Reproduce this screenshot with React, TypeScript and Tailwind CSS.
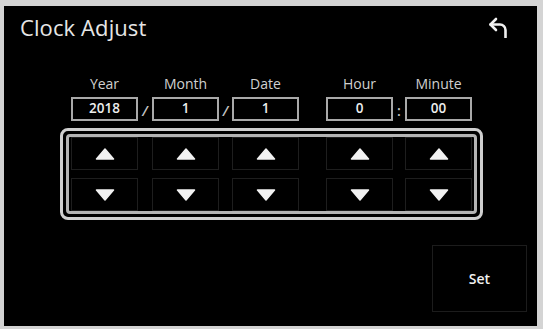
import React from "react";

const cols = [
  { label: "Year", value: "2018" },
  { label: "Month", value: "1" },
  { label: "Date", value: "1" },
  { label: "Hour", value: "0" },
  { label: "Minute", value: "00" },
];
const seps = ["/", "/", "", ":"];
const sepW = ["w-[14px]", "w-[13px]", "w-[27px]", "w-[12px]"];

function Up() {
  return (
    <svg width="20" height="12" viewBox="0 0 20 12">
      <path d="M10 1 L18.5 11 L1.5 11 Z" fill="#f2f2f2" stroke="#f2f2f2" strokeWidth="1.5" strokeLinejoin="round" />
    </svg>
  );
}
function Down() {
  return (
    <svg width="20" height="12" viewBox="0 0 20 12">
      <path d="M1.5 1 L18.5 1 L10 11 Z" fill="#f2f2f2" stroke="#f2f2f2" strokeWidth="1.5" strokeLinejoin="round" />
    </svg>
  );
}

export default function App() {
  return (
    <div
      className="w-[543px] h-[329px] bg-[#d4d4d4] pt-[6px] pl-[4px] pr-[6px] pb-[3px]"
      style={{ fontFamily: '"Open Sans", "Noto Sans", sans-serif' }}
    >
      <div className="bg-black w-full h-full flex flex-col">
        {/* header */}
        <div className="h-[42px] flex items-center justify-between pl-[16px] pr-[29px]">
          <span className="text-[22px] font-medium text-[#e6e6e6] tracking-[0.1px] leading-none">Clock Adjust</span>
          <svg width="20" height="21" viewBox="0 0 20 21" fill="none">
            <path
              d="M2.5 7.5 H12 A5.5 5.5 0 0 1 17.5 13 V20.5"
              stroke="#f0f0f0"
              strokeWidth="2.6"
              strokeLinecap="round"
              strokeLinejoin="round"
            />
            <path
              d="M8 2 L2.5 7.5 L8 13"
              stroke="#f0f0f0"
              strokeWidth="2.6"
              strokeLinecap="round"
              strokeLinejoin="round"
            />
          </svg>
        </div>

        {/* labels */}
        <div className="mt-[28px] pl-[67px] flex h-[16px] items-center">
          {cols.map((c, i) => (
            <React.Fragment key={c.label}>
              <div className="w-[67px] text-center text-[14px] font-medium leading-none text-[#d0d0d0]">{c.label}</div>
              {i < 4 && <div className={sepW[i]} />}
            </React.Fragment>
          ))}
        </div>

        {/* inputs */}
        <div className="mt-[5px] pl-[67px] flex h-[24px] items-stretch">
          {cols.map((c, i) => (
            <React.Fragment key={c.label}>
              <div className="w-[67px] border-2 border-[#a9a9a9] flex items-center justify-center text-[13.5px] font-semibold text-[#eeeeee] leading-none">
                {c.value}
              </div>
              {i < 4 && (
                <div
                  className={`${sepW[i]} flex items-end justify-center pb-[3px] text-[14px] font-semibold leading-none text-[#c4c4c4] ${
                    seps[i] === "/" ? "italic" : ""
                  }`}
                >
                  {seps[i]}
                </div>
              )}
            </React.Fragment>
          ))}
        </div>

        {/* group */}
        <div className="mt-[7px] ml-[56px] w-[423px] h-[92px] border-[3px] border-[#cfcfcf] rounded-[8px] p-[3px]">
          <div className="w-full h-full border-[3px] border-[#b4b4b4] rounded-[4px] pl-[2px] flex flex-col gap-[8px]">
            {[0, 1].map((r) => (
              <div key={r} className="flex h-[33px]">
                {cols.map((c, i) => (
                  <React.Fragment key={c.label}>
                    <div className="w-[67px] border border-[#1e1e1e] flex items-center justify-center">
                      {r === 0 ? <Up /> : <Down />}
                    </div>
                    {i < 4 && <div className={sepW[i]} />}
                  </React.Fragment>
                ))}
              </div>
            ))}
          </div>
        </div>

        {/* set */}
        <div className="mt-[25px] flex justify-end pr-[10px]">
          <div className="w-[95px] h-[67px] border border-[#1c1c1c] flex items-center justify-center">
            <span className="text-[14px] font-semibold text-[#f0f0f0] leading-none">Set</span>
          </div>
        </div>
      </div>
    </div>
  );
}
